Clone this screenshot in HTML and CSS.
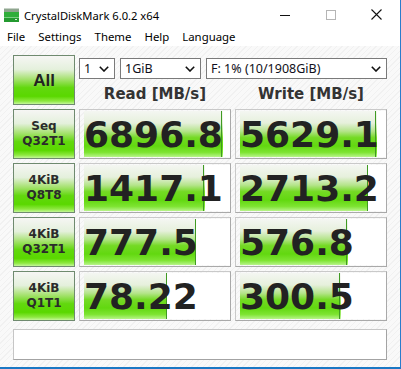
FILE: index.html
```html
<!DOCTYPE html>
<html lang="en">
<head>
    <meta charset="UTF-8">
    <title>CrystalDiskMark 6.0.2 x64</title>
    <link rel="stylesheet" href="styles.css">
</head>
<body>
    <div class="window">
        <!-- Title bar -->
        <div class="titlebar">
            <svg class="app-icon" width="17" height="16" viewBox="0 0 17 16">
                <rect x="1" y="1" width="15" height="4" fill="#8fa58f"/>
                <rect x="1" y="1" width="15" height="1" fill="#c7d3c7"/>
                <rect x="1" y="5" width="15" height="5" fill="#2fae3a"/>
                <rect x="1" y="10" width="15" height="5" fill="#249a30"/>
                <rect x="1" y="10" width="15" height="1" fill="#7ccf84"/>
                <rect x="12" y="12" width="2" height="1" fill="#d8f0da"/>
            </svg>
            <span class="title">CrystalDiskMark 6.0.2 x64</span>
            <div class="controls">
                <svg class="ctl" width="46" height="30" viewBox="0 0 46 30"><line x1="18" y1="15.5" x2="28" y2="15.5" stroke="#111" stroke-width="1"/></svg>
                <svg class="ctl" width="46" height="30" viewBox="0 0 46 30"><rect x="18.5" y="10.5" width="9" height="9" fill="none" stroke="#b5b5b5" stroke-width="1"/></svg>
                <svg class="ctl" width="46" height="30" viewBox="0 0 46 30"><path d="M17.5 9.5 L27.5 19.5 M27.5 9.5 L17.5 19.5" stroke="#111" stroke-width="1.1"/></svg>
            </div>
        </div>

        <!-- Menu -->
        <div class="menubar">
            <span>File</span>
            <span>Settings</span>
            <span>Theme</span>
            <span>Help</span>
            <span>Language</span>
        </div>

        <!-- Main area -->
        <div class="content">
            <div class="grid">
                <div class="btn btn-all">All</div>
                <div class="head">
                    <div class="selects">
                        <div class="select sel-count">1<svg width="10" height="6" viewBox="0 0 10 6"><polyline points="0.8,0.8 5,5 9.2,0.8" fill="none" stroke="#111" stroke-width="1.6"/></svg></div>
                        <div class="select sel-size">1GiB<svg width="10" height="6" viewBox="0 0 10 6"><polyline points="0.8,0.8 5,5 9.2,0.8" fill="none" stroke="#111" stroke-width="1.6"/></svg></div>
                        <div class="select sel-drive">F: 1% (10/1908GiB)<svg width="10" height="6" viewBox="0 0 10 6"><polyline points="0.8,0.8 5,5 9.2,0.8" fill="none" stroke="#111" stroke-width="1.6"/></svg></div>
                    </div>
                    <div class="col-titles">
                        <span>Read [MB/s]</span>
                        <span>Write [MB/s]</span>
                    </div>
                </div>

                <div class="btn">Seq<br>Q32T1</div>
                <div class="value" style="--w: 95.5%">6896.8</div>
                <div class="value" style="--w: 94%">5629.1</div>

                <div class="btn">4KiB<br>Q8T8</div>
                <div class="value" style="--w: 83%">1417.1</div>
                <div class="value" style="--w: 88%">2713.2</div>

                <div class="btn">4KiB<br>Q32T1</div>
                <div class="value" style="--w: 77%">777.5</div>
                <div class="value" style="--w: 74%">576.8</div>

                <div class="btn">4KiB<br>Q1T1</div>
                <div class="value" style="--w: 57%">78.22</div>
                <div class="value" style="--w: 69%">300.5</div>
            </div>

            <div class="comment"></div>
        </div>
    </div>
</body>
</html>
```

FILE: styles.css
```css
body {
    margin: 0;
    padding: 0;
    width: 401px;
    height: 369px;
    overflow: hidden;
    font-family: "Noto Sans", "Open Sans", sans-serif;
    background-color: #fff;
}

.window {
    width: 400px;
    height: 367px;
    border-right: 1px solid #2a7ccc;
    border-bottom: 2px solid #1b78c4;
    display: flex;
    flex-direction: column;
    background-color: #fff;
}

.titlebar {
    height: 30px;
    display: flex;
    align-items: center;
    color: #000;
}

.app-icon {
    margin-left: 3px;
    margin-right: 4px;
}

.title {
    font-size: 11.2px;
}

.controls {
    margin-left: auto;
    display: flex;
}

.ctl {
    display: block;
}

.menubar {
    height: 16px;
    display: flex;
    align-items: flex-start;
    padding-left: 7px;
    font-size: 11.4px;
    line-height: 14px;
}

    .menubar span {
        margin-right: 13px;
    }

.content {
    flex: 1;
    padding: 9px 13px 0 13px;
    background-color: #f8f8f8;
    background-image: repeating-linear-gradient(-45deg, #f9f9f9 0, #f9f9f9 3px, #f1f1f1 3px, #f1f1f1 4px);
}

.grid {
    display: grid;
    grid-template-columns: 62px 152px 152px;
    grid-auto-rows: 50px;
    gap: 4px;
}

.btn {
    box-sizing: border-box;
    border: 1px solid #6f8a6f;
    background: linear-gradient(to bottom, #f6f6f4 0%, #e4f0dc 28%, #a6e270 48%, #62d80e 66%, #5ad800 84%, #8ee840 94%, #c4f79a 100%);
    display: flex;
    align-items: center;
    justify-content: center;
    text-align: center;
    font-family: "DejaVu Sans", sans-serif;
    font-weight: bold;
    font-size: 12px;
    line-height: 15px;
    color: #2b2b2b;
}

.btn-all {
    font-family: "Liberation Sans", Arial, sans-serif;
    font-size: 17px;
    color: #222;
}

.head {
    grid-column: 2 / 4;
    display: flex;
    flex-direction: column;
}

.selects {
    margin-top: 3px;
    display: flex;
    gap: 5px;
}

.select {
    box-sizing: border-box;
    height: 21px;
    border: 1px solid #7a7a7a;
    background-color: #fff;
    display: flex;
    align-items: center;
    justify-content: space-between;
    padding: 0 5px 0 4px;
    font-size: 12.5px;
    color: #101020;
}

.sel-count {
    width: 36px;
}

.sel-size {
    width: 81px;
}

.sel-drive {
    flex: 1;
}

.col-titles {
    display: grid;
    grid-template-columns: 152px 152px;
    gap: 4px;
    margin-top: 6px;
}

    .col-titles span {
        text-align: center;
        font-family: "DejaVu Sans", sans-serif;
        font-weight: bold;
        font-size: 15px;
        color: #333;
    }

.value {
    box-sizing: border-box;
    border: 1px solid #c9c9c9;
    border-right-color: #a9a9a9;
    border-bottom-color: #a9a9a9;
    padding: 1px 0 1px 4px;
    background:
        linear-gradient(#3f9a22, #3f9a22) calc(var(--w) - 1px) 0 / 1px 100% no-repeat,
        linear-gradient(to bottom, #f4f6f2 0%, #e6f0dc 26%, #b4e48a 44%, #74da24 58%, #62d810 76%, #7ee432 90%, #b8f48a 100%) 0 0 / var(--w) 100% no-repeat,
        #fff;
    background-origin: content-box;
    background-clip: content-box;
    display: flex;
    align-items: center;
    overflow: hidden;
    white-space: nowrap;
    font-family: "DejaVu Sans", sans-serif;
    font-weight: bold;
    font-size: 36px;
    color: #222;
}

.comment {
    box-sizing: border-box;
    margin-top: 8px;
    height: 31px;
    border: 1px solid #c6c6c6;
    border-right-color: #a3a3a3;
    border-bottom-color: #a3a3a3;
    background-color: #fff;
}
```
